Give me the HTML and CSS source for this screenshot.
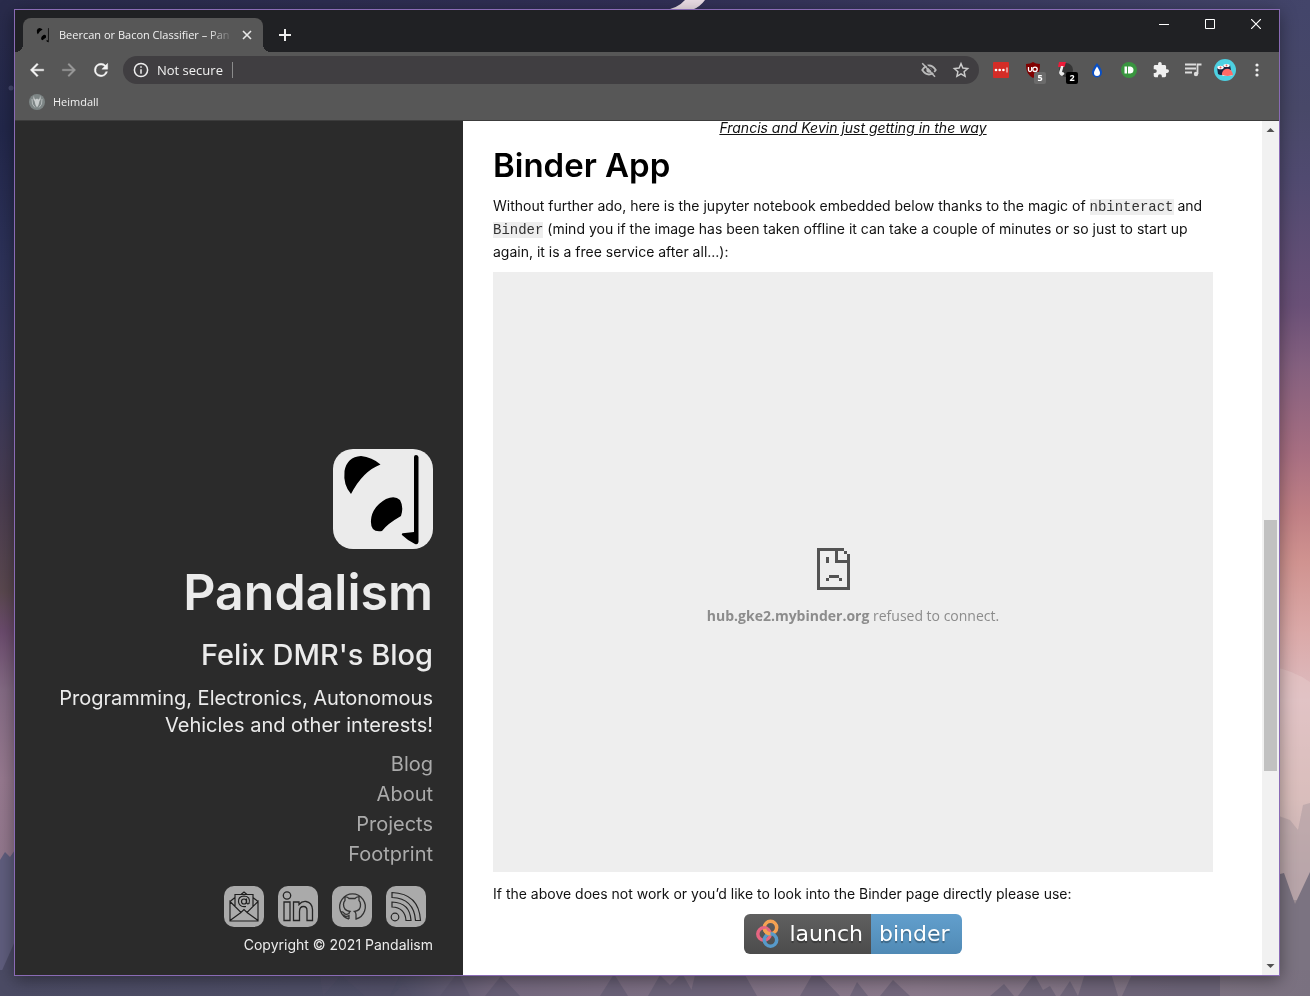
FILE: index.html
```html
<!DOCTYPE html>
<html lang="en">
<head>
<meta charset="utf-8">
<meta name="viewport" content="width=device-width, initial-scale=1">
<title>Beercan or Bacon Classifier – Pandalism</title>
<link rel="stylesheet" href="styles.css">
</head>
<body>
<svg class="wallpaper" viewBox="0 0 1310 996" preserveAspectRatio="none" aria-hidden="true">
  <defs>
    <linearGradient id="sky-left" x1="0" y1="0" x2="0" y2="1">
      <stop offset="0" stop-color="#292b4b"/><stop offset=".12" stop-color="#22274a"/><stop offset=".25" stop-color="#2c3158"/>
      <stop offset=".38" stop-color="#38385a"/><stop offset=".5" stop-color="#4a3d50"/><stop offset=".59" stop-color="#5a484f"/>
      <stop offset=".63" stop-color="#6b4b6d"/><stop offset=".69" stop-color="#846b84"/><stop offset=".78" stop-color="#96798f"/><stop offset="1" stop-color="#8a7488"/>
    </linearGradient>
    <linearGradient id="sky-right" x1="0" y1="0" x2="0" y2="1">
      <stop offset="0" stop-color="#43456a"/><stop offset=".1" stop-color="#484868"/><stop offset=".17" stop-color="#504a70"/>
      <stop offset=".3" stop-color="#6a5077"/><stop offset=".36" stop-color="#84607f"/><stop offset=".45" stop-color="#a86f82"/>
      <stop offset=".51" stop-color="#c08085"/><stop offset=".56" stop-color="#d09390"/><stop offset=".63" stop-color="#dba9a8"/>
      <stop offset=".7" stop-color="#ddbcc0"/><stop offset=".8" stop-color="#cdb2ae"/><stop offset=".88" stop-color="#a4969b"/><stop offset="1" stop-color="#7a6e7e"/>
    </linearGradient>
    <linearGradient id="sky-top" x1="0" y1="0" x2="1" y2="0">
      <stop offset="0" stop-color="#292b4b"/><stop offset=".5" stop-color="#312f55"/><stop offset="1" stop-color="#43456a"/>
    </linearGradient>
    <linearGradient id="ground" x1="0" y1="0" x2="1" y2="0">
      <stop offset="0" stop-color="#4b4b64"/><stop offset=".3" stop-color="#4f4f67"/><stop offset=".38" stop-color="#75697f"/>
      <stop offset=".7" stop-color="#8b7a8c"/><stop offset="1" stop-color="#7a7180"/>
    </linearGradient>
  </defs>
  <rect width="1310" height="996" fill="url(#sky-top)"/>
  <rect y="10" width="655" height="986" fill="url(#sky-left)"/>
  <rect x="655" y="10" width="655" height="986" fill="url(#sky-right)"/>
  <path d="M665 10Q678 8 685 0H705Q700 7 692 10Z" fill="#eadce4"/>
  <circle cx="11" cy="88" r="2.500" fill="#45496e"/>
  <path d="M1260 665Q1290 668 1310 682V900H1260Z" fill="#e6caca" opacity=".5"/>
  <path d="M1276 815L1290 820 1298 830 1303 805 1310 803V900H1276Z" fill="#b09fa4" opacity=".6"/>
  <path d="M0 860L5 852 10 857 15 850V996H0Z" fill="#5f5d7d"/>
  <path d="M0 975L20 930V996H0Z" fill="#4c4b66"/>
  <path d="M1276 875L1284 873 1295 904 1310 872V976H1276Z" fill="#7b7381"/>
  <rect y="970" width="1310" height="26" fill="url(#ground)"/>
  <path d="M320 975H400L390 996H365L341 975 323 996ZM392 996L403 984 412 996ZM440 996L458 972 470 996ZM485 996L501 976 520 996ZM600 996L614 974 628 996ZM648 996L660 975 670 985 682 973 695 996ZM695 975H745L757 996H690ZM800 996L815 970 840 996ZM850 996L857 982 868 996ZM880 996L893 980 910 996ZM990 996L1004 984 1014 996ZM1018 996L1034 974 1043 990 1050 986 1056 996ZM1060 996L1070 981 1078 996ZM1078 996L1086 970H1110L1118 996ZM1122 996L1134 970H1220V996Z" fill="#56536b" opacity=".45"/>
</svg>

<div class="window">
  <header class="titlebar">
    <div class="tab">
      <svg class="favicon" viewBox="0 0 100 100" aria-hidden="true"><use href="#panda"/></svg>
      <span class="tab-title">Beercan or Bacon Classifier – Pan</span>
      <button class="tab-close" aria-label="Close tab"><svg width="10" height="10" viewBox="0 0 10 10"><path d="M1 1L9 9M9 1L1 9" stroke="#e8e8e8" stroke-width="1.600"/></svg></button>
    </div>
    <button class="new-tab" aria-label="New tab"><svg width="12" height="12" viewBox="0 0 12 12"><path d="M6 0V12M0 6H12" stroke="#eee" stroke-width="2"/></svg></button>
    <div class="window-controls">
      <button aria-label="Minimize"><svg width="10" height="10" viewBox="0 0 10 10"><path d="M0 5.500H10" stroke="#fff"/></svg></button>
      <button aria-label="Maximize"><svg width="10" height="10" viewBox="0 0 10 10"><path d="M.5.5H9.500V9.500H.5Z" fill="none" stroke="#fff"/></svg></button>
      <button aria-label="Close"><svg width="10" height="10" viewBox="0 0 10 10"><path d="M0 0L10 10M10 0L0 10" stroke="#fff" stroke-width="1.200"/></svg></button>
    </div>
  </header>

  <div class="toolbar">
    <button class="tool" aria-label="Back"><svg width="20" height="20" viewBox="0 0 24 24"><path d="M20 11H7.830l5.590-5.590L12 4l-8 8 8 8 1.410-1.410L7.830 13H20z" fill="#f5f5f5" stroke="#f5f5f5" stroke-width=".5"/></svg></button>
    <button class="tool" aria-label="Forward"><svg width="20" height="20" viewBox="0 0 24 24"><path d="M12 4l-1.410 1.410L16.170 11H4v2h12.170l-5.580 5.590L12 20l8-8z" fill="#999" stroke="#999" stroke-width=".4"/></svg></button>
    <button class="tool" aria-label="Reload"><svg width="20" height="20" viewBox="0 0 24 24"><path d="M17.650 6.350A7.950 7.950 0 0 0 12 4a8 8 0 1 0 7.730 10h-2.080A6 6 0 1 1 12 6c1.660 0 3.140.69 4.220 1.780L13 11h7V4z" fill="#f5f5f5" stroke="#f5f5f5" stroke-width=".5"/></svg></button>
    <div class="omnibox">
      <svg width="18" height="18" viewBox="0 0 24 24" aria-hidden="true"><circle cx="12" cy="12" r="8.800" fill="none" stroke="#eee" stroke-width="2"/><path d="M11 7h2v2h-2zM11 11h2v6h-2z" fill="#eee"/></svg>
      <label class="security" for="address">Not secure</label>
      <input id="address" class="address" type="text">
      <button class="tool" aria-label="Third-party cookies blocked"><svg width="18" height="18" viewBox="0 0 24 24"><path d="M3 12Q7 6 12 6T21 12Q17 18 12 18T3 12Z" fill="none" stroke="#bbb" stroke-width="2.400"/><circle cx="12" cy="12" r="3.500" fill="#bbb"/><path d="M5 2L22 19" stroke="#403e41" stroke-width="2"/><path d="M3 3L20 21" stroke="#bbb" stroke-width="2"/></svg></button>
      <button class="tool" aria-label="Bookmark this page"><svg width="18" height="18" viewBox="0 0 24 24"><path d="M12 3.500l2.500 5.900 6.400.6-4.800 4.200 1.400 6.200L12 17.100l-5.500 3.300 1.400-6.200L3.100 10l6.400-.6z" fill="none" stroke="#ccc" stroke-width="1.900"/></svg></button>
    </div>
    <div class="extensions">
      <button class="tool" aria-label="Password manager"><svg width="16" height="16" viewBox="0 0 16 16"><rect width="16" height="16" rx="1" fill="#d32d27"/><circle cx="3" cy="8" r="1.300" fill="#fff"/><circle cx="6.700" cy="8" r="1.300" fill="#fff"/><circle cx="10.400" cy="8" r="1.300" fill="#fff"/><path d="M14 5.500V10.500" stroke="#fff"/></svg></button>
      <button class="tool" aria-label="Ad blocker"><svg width="16" height="16" viewBox="0 0 16 16"><path d="M8 0Q10.500 2 15 2Q15.500 12 8 16Q.5 12 1 2Q5.500 2 8 0Z" fill="#800000"/><path d="M3.500 5V8Q3.500 9.500 5 9.500T6.700 8V5" fill="none" stroke="#fff" stroke-width="1.300"/><circle cx="10" cy="7.300" r="2.200" fill="none" stroke="#fff" stroke-width="1.300"/></svg><span class="count">5</span></button>
      <button class="tool" aria-label="Tag tool"><svg width="16" height="16" viewBox="0 0 16 16"><circle cx="9" cy="8" r="7" fill="#353535"/><path d="M2 0H9L7.500 5H1Z" fill="#ed1c3a"/><path d="M4 4H6.500L5 10Q7.500 10 7.500 12L5 14Q1 12 2.500 9Z" fill="#eee"/></svg><span class="count count-dark">2</span></button>
      <button class="tool" aria-label="Drop"><svg width="16" height="16" viewBox="0 0 16 16"><path d="M8 1Q13 7 13 10.500A5 5 0 0 1 3 10.500Q3 7 8 1Z" fill="#0a4fc4"/><path d="M8 4.500Q11 9 11 11A3 3 0 0 1 5 11Q5 9 8 4.500Z" fill="#fff"/></svg></button>
      <button class="tool" aria-label="Push notifications"><svg width="16" height="16" viewBox="0 0 16 16"><circle cx="8" cy="8" r="8" fill="#39953f"/><path d="M3.500 4.500H6V11.500H3.500ZM7 4.500H9.500Q12.500 5 12.500 8T9.500 11.500H7Z" fill="#fff"/></svg></button>
      <button class="tool" aria-label="Extensions"><svg width="16" height="16" viewBox="1 1 22 22"><path d="M20.500 11H19V7c0-1.100-.9-2-2-2h-4V3.500a2.500 2.500 0 0 0-5 0V5H4c-1.100 0-2 .9-2 2v3.800h1.500a2.700 2.700 0 0 1 0 5.400H2V20c0 1.100.9 2 2 2h3.800v-1.500a2.700 2.700 0 0 1 5.400 0V22H17c1.100 0 2-.9 2-2v-4h1.500a2.500 2.500 0 0 0 0-5z" fill="#f0f0f0"/></svg></button>
      <button class="tool" aria-label="Media controls"><svg width="18" height="18" viewBox="0 0 18 18"><path d="M1 3.500H12M1 7.500H12M1 11.500H8M13.500 13V3.500H17.500" fill="none" stroke="#ddd" stroke-width="1.800"/><circle cx="12" cy="13" r="2.200" fill="#ddd"/></svg></button>
      <button class="tool" aria-label="Profile"><svg width="22" height="22" viewBox="0 0 22 22"><circle cx="11" cy="11" r="11" fill="#4dd0e1"/><path d="M3 8L4 15Q7 17 10 15V8ZM9 6V11H17L16 6Z" fill="#1b2440"/><ellipse cx="6.500" cy="8.500" rx="3.300" ry="1.800" fill="#fff"/><ellipse cx="12.500" cy="6.500" rx="3.300" ry="1.600" fill="#fff"/><circle cx="6.500" cy="8.500" r="1" fill="#ef5350"/><circle cx="12.500" cy="6.500" r=".9" fill="#ef5350"/><path d="M8 14Q10 9 15 10Q18 11 19 16Q13 18 8 16Z" fill="#ff6b66"/><path d="M8 16Q14 18 19 16L17 17H9Z" fill="#fff"/></svg></button>
      <button class="tool" aria-label="Menu"><svg width="18" height="18" viewBox="0 0 18 18"><circle cx="9" cy="4" r="1.600" fill="#eee"/><circle cx="9" cy="9" r="1.600" fill="#eee"/><circle cx="9" cy="14" r="1.600" fill="#eee"/></svg></button>
    </div>
  </div>

  <nav class="bookmarks" aria-label="Bookmarks">
    <a class="bookmark" href="#"><svg width="16" height="16" viewBox="0 0 16 16" aria-hidden="true"><circle cx="8" cy="8" r="8" fill="#7d8585"/><path d="M5 1.500Q3.500 5 5.500 7L6.500 11 8 13.500 9.500 11 10.500 7Q12.500 5 11 1.500Q11 5 9.500 5.500L8 4.500 6.500 5.500Q5 5 5 1.500Z" fill="#c9cdcd"/><path d="M3 5Q2.500 11 6 13.500M13 5Q13.500 11 10 13.500" fill="none" stroke="#b5bbbb"/></svg>Heimdall</a>
  </nav>

  <div class="page">
    <aside class="sidebar">
      <svg class="logo" viewBox="0 0 100 100" role="img" aria-label="Pandalism logo">
        <g id="panda">
          <path d="M18 45Q10 36 11.500 22Q14 8 28 7Q39 8 47.500 15.500Q30 22 18 45Z"/>
          <path d="M49 82Q37 84 38 71Q39 58 53 50Q62 46 67 51Q71 58 68 67Q54 75 49 82Z"/>
          <path d="M81 8Q81 6 83 6T85.500 8V93Q85 96 82 95Q74 91 69 86Q68 84 72 84L81 83Z"/>
        </g>
      </svg>
      <h1 class="site-name">Pandalism</h1>
      <h2 class="site-owner">Felix DMR's Blog</h2>
      <p class="tagline">Programming, Electronics, Autonomous Vehicles and other interests!</p>
      <nav class="site-nav" aria-label="Site">
        <a href="#">Blog</a>
        <a href="#">About</a>
        <a href="#">Projects</a>
        <a href="#">Footprint</a>
      </nav>
      <div class="social">
        <a href="#" aria-label="Email"><svg viewBox="0 0 40 40"><g fill="none" stroke="#1e1e1e" stroke-width="1.200"><path d="M6 15L17 26 20 23 23 26 34 15V34.500H6ZM6 34L17 26M34 34L23 26M6 15L11 11M34 15L29 11M11 20V8H29V20M17 8L20 5.500 23 8"/><circle cx="20" cy="15" r="2.500"/><path d="M22.500 12V16Q23 18 25 17Q27 10 20 9.500Q14 10 14.500 15.500Q15.500 21 22 20"/></g></svg></a>
        <a href="#" aria-label="LinkedIn"><svg viewBox="0 0 40 40"><g fill="none" stroke="#252525" stroke-width="1.300"><circle cx="9" cy="9" r="3.700"/><path d="M6 15.500H12V34H6ZM15.500 15.500H21V18Q24 14.500 28 15Q34 16 34.500 23V34H29V24Q29 20 25.500 20Q21.500 20 21.500 25V34H15.500Z"/></g></svg></a>
        <a href="#" aria-label="GitHub"><svg viewBox="0 0 40 40"><g fill="none" stroke="#333" stroke-width="1.300"><path d="M17 32.500A12.800 12.800 0 1 1 24 32.500V28Q24 26 22.500 25Q29 24 28.500 18Q28.500 15.500 27 14V10.500Q25 10 23 12H17Q15 10 13 10.500V14Q11.500 15.500 11.500 18Q11.500 24 18 25Q17 26 17 27Q13 29 11.500 26L9.500 25M17 32.500V29Q13 31 11 28"/></g></svg></a>
        <a href="#" aria-label="RSS feed"><svg viewBox="0 0 40 40"><g fill="none" stroke="#252525" stroke-width="1.200"><circle cx="9" cy="30.500" r="3.800"/><path d="M6 6Q33 7 34.500 34H29.500Q28 12 6 11ZM6 15.500Q24 16 25 34H20Q19 21 6 20.500Z"/></g></svg></a>
      </div>
      <small class="copyright">Copyright © 2021 Pandalism</small>
    </aside>

    <main class="content">
      <article class="article">
        <p class="caption">Francis and Kevin just getting in the way</p>
        <h2 class="heading">Binder App</h2>
        <p class="text">Without further ado, here is the jupyter notebook embedded below thanks to the magic of <code>nbinteract</code> and <code>Binder</code> (mind you if the image has been taken offline it can take a couple of minutes or so just to start up again, it is a free service after all...):</p>
        <section class="embed">
          <svg width="34" height="42" viewBox="0 0 34 42" shape-rendering="crispEdges" aria-hidden="true"><path d="M0 0H27V3H30V6H33V42H0ZM3 3V39H30V15H18V3ZM21 3V12H30V6H27V3ZM9 9H12V15H9ZM12 27H22V30H12ZM9 30H12V33H9ZM22 30H25V33H22Z" fill="#535353" fill-rule="evenodd"/></svg>
          <p class="embed-text"><strong>hub.gke2.mybinder.org</strong> refused to connect.</p>
        </section>
        <p class="text">If the above does not work or you’d like to look into the Binder page directly please use:</p>
        <a class="badge" href="#">
          <span class="badge-left"><svg width="24" height="30" viewBox="0 0 24 30" aria-hidden="true"><g fill="none" stroke-width="3.500"><circle cx="14.500" cy="8.500" r="6.200" stroke="#f5a252"/><circle cx="8" cy="15" r="6.200" stroke="#e66581"/><circle cx="14.500" cy="21" r="6.200" stroke="#579aca"/><path d="M8.500 10A6.200 6.200 0 0 0 14.500 14.700" stroke="#f5a252"/></g></svg>launch</span><span class="badge-right">binder</span>
        </a>
      </article>
    </main>

    <div class="scrollbar" aria-hidden="true">
      <svg width="17" height="17" viewBox="0 0 17 17"><path d="M4.500 11L8.500 7 12.500 11Z" fill="#505050"/></svg>
      <div class="track"><div class="thumb"></div></div>
      <svg width="17" height="17" viewBox="0 0 17 17"><path d="M4.500 6L8.500 10 12.500 6Z" fill="#505050"/></svg>
    </div>
  </div>
</div>
</body>
</html>
```

FILE: styles.css
```css
* { box-sizing: border-box; }

body {
  margin: 0;
  min-height: 100vh;
  display: flex;
  padding: 9px 30px 20px 14px;
  font-family: Inter, "Liberation Sans", sans-serif;
}

h1, h2, p { margin: 0; }
a { color: inherit; text-decoration: none; }
svg { display: block; flex: none; }

button {
  display: flex;
  align-items: center;
  justify-content: center;
  padding: 0;
  border: 0;
  background: none;
}

.wallpaper {
  position: fixed;
  inset: 0;
  z-index: -1;
  width: 100%;
  height: 100%;
}

.window {
  flex: 1;
  min-width: 0;
  display: flex;
  flex-direction: column;
  border: 1px solid #8a6bb5;
  background: #575757;
  box-shadow: 0 4px 16px rgba(0, 0, 0, 0.4);
  color: #f1f1f1;
}

/* Browser chrome */
.titlebar, .toolbar, .bookmarks, .window-controls, .extensions, .omnibox, .tab, .bookmark {
  display: flex;
  align-items: center;
}

.titlebar {
  height: 42px;
  padding-left: 8px;
  background: #202124;
  font-family: "Open Sans", sans-serif;
}

.tab {
  align-self: flex-end;
  position: relative;
  width: 240px;
  height: 34px;
  padding: 0 10px 0 12px;
  gap: 8px;
  border-radius: 8px 8px 0 0;
  background: #575757;
}

.tab::before, .tab::after {
  content: "";
  position: absolute;
  bottom: 0;
  width: 8px;
  height: 8px;
}
.tab::before { left: -8px; background: radial-gradient(circle at 0 0, #202124 8px, #575757 8px); }
.tab::after { right: -8px; background: radial-gradient(circle at 100% 0, #202124 8px, #575757 8px); }

.favicon { width: 16px; height: 16px; }

.tab-title {
  flex: 1;
  overflow: hidden;
  white-space: nowrap;
  font-size: 11px;
  line-height: 16px;
  mask-image: linear-gradient(to right, #000 86%, transparent);
}

.tab-close { width: 12px; height: 16px; }
.new-tab { width: 28px; height: 28px; margin: 8px 0 0 8px; }

.window-controls { align-self: flex-start; margin-left: auto; }
.window-controls button { width: 46px; height: 28px; }

.toolbar {
  height: 36px;
  padding: 0 6px;
}

.tool {
  position: relative;
  flex: none;
  width: 32px;
  height: 28px;
}

.omnibox {
  flex: 1;
  min-width: 0;
  height: 28px;
  margin: 0 6px;
  padding: 0 2px 0 9px;
  border-radius: 14px;
  background: #403e41;
}

.security {
  margin-left: 7px;
  padding-right: 9px;
  border-right: 1px solid #8b8b8b;
  font: 13px/16px "Open Sans", sans-serif;
}

.address {
  flex: 1;
  min-width: 0;
  padding: 0 8px;
  border: 0;
  outline: 0;
  background: none;
  color: inherit;
  font: 13px/16px "Open Sans", sans-serif;
}

.count {
  position: absolute;
  right: 3px;
  bottom: 0;
  width: 12px;
  height: 12px;
  border-radius: 2px;
  background: #6b6b6b;
  color: #fff;
  font: bold 9px/12px "Open Sans", sans-serif;
  text-align: center;
}
.count-dark { background: #000; }

.bookmarks {
  height: 33px;
  padding: 0 14px 4px;
  border-bottom: 1px solid #3c3c3c;
}

.bookmark {
  gap: 8px;
  font: 11px/16px "Open Sans", sans-serif;
}

/* Page */
.page {
  flex: 1;
  display: flex;
  background: #fff;
}

.sidebar {
  flex: 0 0 448px;
  display: flex;
  flex-direction: column;
  align-items: flex-end;
  justify-content: flex-end;
  padding: 30px 30px 20px;
  background: #2b2b2b;
  color: #ebebeb;
  text-align: right;
}

.logo {
  width: 100px;
  height: 100px;
  border-radius: 20px;
  background: #ebebeb;
}

.site-name {
  margin-top: 13px;
  font-size: 50px;
  font-weight: 600;
  line-height: 60px;
}

.site-owner {
  margin-top: 15px;
  font-size: 29px;
  font-weight: 500;
  line-height: 36px;
}

.tagline {
  margin-top: 12px;
  font-size: 20px;
  line-height: 27px;
}

.site-nav {
  display: flex;
  flex-direction: column;
  margin-top: 10px;
  color: #aaa;
  font-size: 20px;
  line-height: 30px;
}

.social {
  display: flex;
  gap: 14px;
  margin: 17px 7px 8px;
}

.social svg {
  width: 40px;
  height: 41px;
  border-radius: 10px;
  background: #aaa;
}

.copyright {
  font-size: 14px;
  line-height: 20px;
}

.content {
  flex: 1;
  min-width: 0;
  padding: 0 30px 20px;
  color: #111;
}

.article {
  display: flex;
  flex-direction: column;
  max-width: 720px;
}

.caption {
  align-self: center;
  font-size: 14px;
  font-style: italic;
  line-height: 14px;
  text-decoration: underline;
}

.heading {
  margin: 10px 0 9px;
  color: #000;
  font-size: 33px;
  font-weight: 600;
  line-height: 40px;
}

.text {
  font-size: 14px;
  line-height: 23px;
}

.text code {
  background: #eee;
  color: #333;
  font: 14px/16px "Liberation Mono", monospace;
}

.embed {
  display: flex;
  flex-direction: column;
  align-items: center;
  justify-content: center;
  gap: 16px;
  height: 600px;
  margin: 9px 0 10px;
  padding-top: 30px;
  background: #eee;
}

.embed svg { margin-right: 38px; }

.embed-text {
  color: #8c8c8c;
  font: 14px/20px "Open Sans", sans-serif;
}

.badge {
  align-self: center;
  display: flex;
  height: 40px;
  margin-top: 9px;
  overflow: hidden;
  border-radius: 6px;
  color: #fff;
  font: 22px/40px "DejaVu Sans", sans-serif;
  text-shadow: 0 2px 1px rgba(0, 0, 0, 0.3);
}

.badge-left, .badge-right {
  display: flex;
  align-items: center;
  padding: 0 8px;
}
.badge-left { gap: 9px; padding-left: 12px; background: linear-gradient(#606060, #4c4c4c); }
.badge-right { padding-right: 12px; background: linear-gradient(#629fcd, #508ab5); }

.scrollbar {
  display: flex;
  flex-direction: column;
  width: 17px;
  background: #f1f1f1;
}

.track {
  flex: 1;
  display: grid;
  grid-template-rows: 382fr 251fr 187fr;
}

.thumb {
  grid-row: 2;
  margin: 0 2px;
  background: #c1c1c1;
}
```
